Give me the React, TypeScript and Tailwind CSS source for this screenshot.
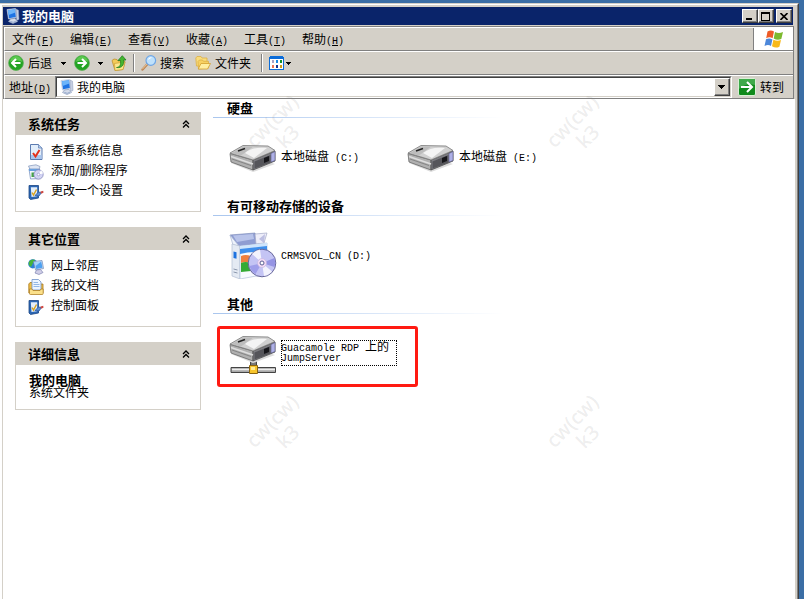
import type { ReactNode } from "react";

type Kids = { children: ReactNode };

const raised = "border border-t-white border-l-white border-r-[#404040] border-b-[#404040] bg-[#d4d0c8] shadow-[inset_-1px_-1px_0_#808080]";

function Mono({ children }: Kids) {
  return <span className="font-['Liberation_Mono',monospace] text-[10px] leading-none">{children}</span>;
}

function ComputerIcon() {
  return (
    <svg viewBox="0 0 16 16" className="size-4 shrink-0" aria-hidden="true">
      <path d="M2 1.500 10.500 .5 11.500 9.500 3.500 11z" fill="#e6edf7" stroke="#b4c3dc" strokeWidth=".7" />
      <path d="M2.800 2.200 10 1.300 10.900 8.900 4 10.200z" fill="#1f74e4" />
      <path d="M2.800 2.200 10 1.300 10.400 4.500 3.500 7z" fill="#6cb4fa" />
      <path d="M11 1 13.500 2.200 14 11.500 11.500 12.500z" fill="#c6cfe2" stroke="#8d9bb8" strokeWidth=".5" />
      <path d="M5.500 11 10 10.300 12.500 13.500 8 15.500 3.500 13.500z" fill="#d5dcea" stroke="#8c9dbd" strokeWidth=".7" />
      <path d="m5.300 13.300 2.900 1 2.800-1.200" stroke="#7f98c2" strokeWidth=".7" fill="none" />
    </svg>
  );
}

function RoundArrow({ back = false }: { back?: boolean }) {
  return (
    <svg viewBox="0 0 16 16" className="size-4 shrink-0" aria-hidden="true">
      <circle cx="8" cy="8" r="7.400" fill="#22a322" stroke="#5cae55" strokeWidth=".8" />
      <path d="M2 7a6 6 0 0 1 12 0c-3-2-9-2-12 0z" fill="#5cc850" />
      <path d={back ? "M12.500 8H4.500M8 4 4 8l4 4" : "M3.500 8h8M8 4l4 4-4 4"} stroke="#fff" strokeWidth="2" fill="none" />
    </svg>
  );
}

function UpFolderIcon() {
  return (
    <svg viewBox="0 0 16 16" className="size-4 shrink-0" aria-hidden="true">
      <path d="M1 5.500 3 4l3 .5 1 1.500 6-.5 1 1.500-2 7.500-8 1z" fill="#f3cb58" stroke="#b98a22" strokeWidth=".7" />
      <path d="M3.500 8.500 14 7l-2 7.500L4 15.500z" fill="#fde88f" stroke="#c2962c" strokeWidth=".6" />
      <path d="M5.500 12.500c3.500-.3 4.500-2.800 4-7H7L11.300.700 15 5h-2.300c.5 5-1.700 8.300-7.200 7.500z" fill="#44b62f" stroke="#17751a" strokeWidth=".7" />
    </svg>
  );
}

function SearchIcon() {
  return (
    <svg viewBox="0 0 16 16" className="size-4 shrink-0" aria-hidden="true">
      <path d="M6.500 9 1.500 14.500" stroke="#b98556" strokeWidth="2.400" strokeLinecap="round" />
      <path d="M6.300 8.800 1.500 14" stroke="#f0c898" strokeWidth="1" strokeLinecap="round" />
      <circle cx="9.800" cy="5.500" r="4.800" fill="#bfe1fb" stroke="#6ea6e6" strokeWidth="1.200" />
      <path d="M7 5a3.200 3.200 0 0 1 4-2.600C9.500 3 8.500 4 7 5z" fill="#fff" />
    </svg>
  );
}

function FoldersIcon() {
  return (
    <svg viewBox="0 0 16 16" className="size-4 shrink-0" aria-hidden="true">
      <path d="M.8 3 2 1.500h4L7 3h5v8H1.500z" fill="#f8dc7d" stroke="#dcae44" strokeWidth=".8" />
      <path d="M3 6.500 4.500 5h3l1 1.300h5V13l-10 1z" fill="#f7d163" stroke="#dcae44" strokeWidth=".8" />
      <path d="M3.200 14 6 8.500h9.500L12.500 14z" fill="#ffeea2" stroke="#d39f2e" strokeWidth=".8" />
    </svg>
  );
}

function ViewsIcon() {
  return (
    <svg viewBox="0 0 16 16" className="size-4 shrink-0" aria-hidden="true" shapeRendering="crispEdges">
      <path d="M0 2h1V1h13v1h1v13H0z" fill="#0c6cd8" />
      <path d="M1 4h13v10H1z" fill="#fff" />
      <path d="M3 5h2v3H3z" fill="#a9a3c5" />
      <path d="M7 5h2v3H7z" fill="#1688e2" />
      <path d="M11 5h2v3h-2z" fill="#129028" />
      <path d="M3 10h2v3H3z" fill="#ec7554" />
      <path d="M7 10h2v3H7z" fill="#16348f" />
      <path d="M11 10h2v3h-2z" fill="#cf9c14" />
    </svg>
  );
}

function FlagIcon() {
  return (
    <svg viewBox="0 0 20 18" className="h-[18px] w-5" aria-hidden="true">
      <path d="M3.500 1.500C6-.2 8 .3 10 1.500L8.600 8.300C6.500 7 4.500 7 2.200 8.200z" fill="#ee5b27" />
      <path d="M11 2c2.500 1.300 5 1.300 8 0l-1.700 7c-2.500 1.200-5 1-7.600-.4z" fill="#7cb92e" />
      <path d="M2 9.300c2.300-1.300 4.300-1.200 6.400.2L7 16C5 14.600 3 14.700.5 16z" fill="#4c87da" />
      <path d="M9.400 9.800c2.500 1.200 5 1.300 7.600.3l-1.600 6.600c-2.700 1.300-5 1-7.400-.4z" fill="#f8b91b" />
    </svg>
  );
}

function GoIcon() {
  return (
    <svg viewBox="0 0 18 18" className="size-[18px] shrink-0" aria-hidden="true">
      <rect x=".5" y=".5" width="17" height="17" rx="1.500" fill="#108a1c" stroke="#d9efd5" />
      <path d="M1 1h16v6C11 5 6 7 1 11z" fill="#3fa94a" />
      <path d="M3 9h11M9 4l5 5-5 5" stroke="#fff" strokeWidth="2" fill="none" />
    </svg>
  );
}

function InfoIcon() {
  return (
    <svg viewBox="0 0 16 16" className="size-4 shrink-0" aria-hidden="true">
      <path d="M2.500.5h8L14 4v11.500H2.500z" fill="#e2eefb" stroke="#5c7bb0" />
      <path d="M10.500.5V4H14" fill="#b5cdec" stroke="#5c7bb0" strokeWidth=".7" />
      <path d="M3 11h10.500v4H3z" fill="#a9c6ee" />
      <path d="m5 9 2.500 3.500L11.500 6" stroke="#e3301b" strokeWidth="2" fill="none" />
    </svg>
  );
}

function ProgramsIcon() {
  return (
    <svg viewBox="0 0 16 16" className="size-4 shrink-0" aria-hidden="true">
      <path d="M.5 2 8 .8 12 2.500 11 6 2.500 6.500z" fill="#dfe6f3" stroke="#8093b9" strokeWidth=".7" />
      <path d="M1 5h10.500v9.500L2.500 15z" fill="#f4f7fc" stroke="#6886b8" strokeWidth=".7" />
      <path d="M1 5h10.500v2H1z" fill="#69a1e0" />
      <path d="M3.500 8.500h3V13h-3z" fill="#47a447" />
      <circle cx="10.500" cy="10.500" r="4.700" fill="#d3d4f4" stroke="#7b7fb4" strokeWidth=".7" />
      <path d="m10.500 10.500 2.500-4a4.700 4.700 0 0 1 2 3z" fill="#fff" />
      <circle cx="10.500" cy="10.500" r="1.300" fill="#fff" stroke="#888cc4" strokeWidth=".6" />
    </svg>
  );
}

function SettingsIcon() {
  return (
    <svg viewBox="0 0 16 16" className="size-4 shrink-0" aria-hidden="true">
      <path d="M1 1.500h9.500V14L2.500 15.500 1 14z" fill="#2b67b5" stroke="#1d4683" strokeWidth=".8" />
      <path d="M2.800 3.300h6.400v8.900L3.500 13z" fill="#e3eefb" />
      <path d="M4 8.500 5.500 11 8.500 5.500" stroke="#d8a31c" strokeWidth="1.400" fill="none" />
      <path d="m7 11.500 3.500-3.500 3 .5-2.500 3.500z" fill="#5b90d6" stroke="#2b559a" strokeWidth=".8" />
      <path d="m12.500 7.500 2.700-.7.300 2-2.500 1z" fill="#cf4a43" />
    </svg>
  );
}

function NetworkIcon() {
  return (
    <svg viewBox="0 0 16 16" className="size-4 shrink-0" aria-hidden="true">
      <circle cx="4.800" cy="4.800" r="4.600" fill="#2b7fd8" />
      <path d="M.8 3c1.500-2.500 4-3.200 6.500-2L5 4 3 8 .8 6z" fill="#46b43c" />
      <path d="M5.500 2.500 14 1.500l1.500 8L7.500 11z" fill="#dbe6f4" stroke="#6d87b5" strokeWidth=".7" />
      <path d="m6.500 3.300 6.800-.9 1.200 6.400-6.300 1.100z" fill="#4da1f1" />
      <path d="m6.500 3.300 6.800-.9-6 4.900z" fill="#a4d5fb" />
      <path d="m8.500 11 4-.5 2.500 3-4 2-4-1.500z" fill="#d0cee7" stroke="#7c83b0" strokeWidth=".7" />
    </svg>
  );
}

function DocumentsIcon() {
  return (
    <svg viewBox="0 0 16 16" className="size-4 shrink-0" aria-hidden="true">
      <path d="M.8 5 2 3.500h3l1 1.500h9V14H.8z" fill="#f0bd45" stroke="#a87a1e" strokeWidth=".8" />
      <path d="M4 .5h6.500L13 3v8H4z" fill="#edf5ff" stroke="#6f92c9" strokeWidth=".8" />
      <path d="M5.500 3.500h4.500M5.500 5.500h6M5.500 7.500h6" stroke="#7ba7e0" strokeWidth=".8" />
      <path d="M1.500 10h2.500l1 1.500h7l1-1.500h2.200v4.500q0 1-1 1H2.500q-1 0-1-1z" fill="#fbe08a" stroke="#b0812a" strokeWidth=".8" />
    </svg>
  );
}

function DriveBody() {
  return (
    <g>
      <path d="M2 30 24 39 46 31 40 29z" fill="#dcdcdc" />
      <path d="M1 20.500 24 27V37L2 29z" fill="#b0b0b0" stroke="#666" strokeWidth=".8" />
      <path d="M24 27 46 18V28L24 37z" fill="#7d7d82" stroke="#4c4c4c" strokeWidth=".8" />
      <path d="M1 20 14 12.500 39 13l7 4.500L24 27z" fill="#d0d0d0" stroke="#777" strokeWidth=".8" />
      <path d="M3 20 14.500 13.500 24 13.700 12 22.500z" fill="#bcbcbc" />
      <path d="M16 20c6-5 13-6 22-5L25 25z" fill="#f4f4f4" />
      <path d="m9 18 7-2.500" stroke="#222" strokeWidth="1.500" />
      <path d="M2 23.500 24 31" stroke="#dedede" strokeWidth="1.500" />
      <path d="M3 26 22 32.500" stroke="#858585" />
      <path d="m25.500 28.500 16-6.500v7.500l-16 6z" fill="#55555a" />
      <path d="m35 25 5-2v5l-5 2z" fill="#16161a" />
      <path d="m42 20.500 4-2v9L42 29z" fill="#aeb0e6" stroke="#5b5c88" strokeWidth=".6" />
    </g>
  );
}

function DriveIcon() {
  return (
    <svg viewBox="0 0 48 48" className="size-12 shrink-0" aria-hidden="true">
      <DriveBody />
    </svg>
  );
}

function NetworkDriveIcon() {
  return (
    <svg viewBox="0 0 48 48" className="size-12 shrink-0" aria-hidden="true">
      <path d="M21.500 28h6v10h-6z" fill="#777" stroke="#444" />
      <g transform="translate(0 -5)">
        <DriveBody />
      </g>
      <path d="M2 38.500h44.500v5H2z" fill="#a9a9a9" stroke="#444" />
      <path d="M3 40.500h43" stroke="#ededed" strokeWidth="1.500" />
      <path d="M20.500 36.500h8v8h-8z" fill="#f7c52c" stroke="#8c6510" />
      <path d="M22 38h4v3h-4z" fill="#ffec96" />
    </svg>
  );
}

function DiscBoxIcon() {
  return (
    <svg viewBox="0 0 48 48" className="size-12 shrink-0" aria-hidden="true">
      <path d="M1 4 26 2l2 11-18 3z" fill="#8f9dd2" stroke="#8492bd" strokeWidth=".7" />
      <path d="M4 4.500 24 3l1 5-17 3z" fill="#b9c4ea" />
      <path d="M1 4 10 15l-6-1z" fill="#eef3fb" stroke="#a9b6d2" strokeWidth=".7" />
      <path d="m26 3 12-1-3 10-8 1z" fill="#eeeef9" stroke="#a3a9c6" strokeWidth=".7" />
      <path d="m30 8 6-5-1 9z" fill="#bdbfe2" />
      <path d="m3 13 8 2v33l-8-3z" fill="#e4eaf3" stroke="#b3bfd3" strokeWidth=".7" />
      <path d="m4.500 20.500 3 .8v6.500l-3-.8z" fill="#1d72df" />
      <path d="m4.500 38 4 1m-4 2 4 1" stroke="#8c98ad" />
      <path d="m11 15 27-3v31l-27 5z" fill="#f8fbff" stroke="#b3c1da" strokeWidth=".7" />
      <path d="m11 17 27-3v12c-6-6-14-6-27-3z" fill="#3f8fec" />
      <path d="M11 15 38 12v3l-27 3z" fill="#cfe5fc" />
      <path d="M12 25c3-1.500 6-1.500 10 0v7c-4-1.500-7-1.500-10 0z" fill="#f0803e" />
      <path d="M12 32c3-1.500 6-1.500 10 0v8l-10 1z" fill="#35ab35" />
      <circle cx="33" cy="32" r="13.800" fill="#c4c4f4" stroke="#67679a" />
      <path d="M33 32 23 23a13 13 0 0 1 8-4.500zM33 32l10 8.500a13 13 0 0 1-8 4.500z" fill="#fff" opacity=".8" />
      <path d="m33 32 12.500-5a13 13 0 0 1 0 9z" fill="#9594e4" />
      <path d="m33 32-12.500 3a13 13 0 0 0 6 8z" fill="#9f9eea" />
      <circle cx="33" cy="32" r="4.500" fill="#f2dbf4" stroke="#c3b6e2" strokeWidth=".7" />
      <circle cx="33" cy="32" r="2" fill="#fff" stroke="#595d93" />
    </svg>
  );
}

function DownArrow() {
  return (
    <svg viewBox="0 0 5 3" className="h-[3px] w-[5px]" aria-hidden="true" shapeRendering="crispEdges">
      <path d="M0 0h5v1H4v1H3v1H2V2H1V1H0z" />
    </svg>
  );
}

function Separator() {
  return <span className="h-[18px] w-[2px] border-l border-[#808080] bg-white" />;
}

function Bar({ children, className }: Kids & { className: string }) {
  return (
    <div className={"flex h-6 items-center border-t border-b border-l border-t-white border-b-[#808080] border-l-white " + className}>
      {children}
    </div>
  );
}

const menus = [
  ["文件", "F"],
  ["编辑", "E"],
  ["查看", "V"],
  ["收藏", "A"],
  ["工具", "T"],
  ["帮助", "H"],
];

function Panel({ title, children }: Kids & { title: string }) {
  return (
    <section className="border border-[#d4d0c8]">
      <h2 className="flex h-[22px] items-center justify-between bg-[#d4d0c8] pr-[10px] pl-3 text-[13px] font-bold">
        {title}
        <button aria-label={"折叠" + title}>
          <svg viewBox="0 0 8 8" className="size-2" aria-hidden="true">
            <path d="m1 4 3-3 3 3M1 7.500l3-3 3 3" stroke="#000" strokeWidth="1.300" fill="none" />
          </svg>
        </button>
      </h2>
      {children}
    </section>
  );
}

function TaskList({ tasks }: { tasks: { icon: ReactNode; text: string }[] }) {
  return (
    <ul className="px-3 pt-[5px] pb-[11px]">
      {tasks.map((task) => (
        <li key={task.text}>
          <a href="#" className="flex h-5 items-center gap-[7px]">
            <span className="pt-1">{task.icon}</span>
            {task.text}
          </a>
        </li>
      ))}
    </ul>
  );
}

function Group({ title, children }: Kids & { title: string }) {
  return (
    <section>
      <h2 className="py-px pl-[14px] text-[13px] leading-4 font-bold">{title}</h2>
      <div className="h-px max-w-[290px] bg-linear-to-r from-[#a9c6ee] to-white" />
      <ul className="flex flex-wrap pt-[15px] pb-4 pl-4">{children}</ul>
    </section>
  );
}

function Item({ icon, children }: Kids & { icon: ReactNode }) {
  return (
    <li className="w-[178px]">
      <a href="#" className="flex items-center gap-1 leading-3 whitespace-nowrap">
        {icon}
        <span>{children}</span>
      </a>
    </li>
  );
}

function Watermark({ place }: { place: string }) {
  return (
    <div className={"pointer-events-none absolute h-11 w-[76px] -rotate-45 text-center font-['Noto_Sans',sans-serif] text-[20px] leading-[22px] font-medium text-[#808080]/15 " + place}>
      <p>cw(cw)</p>
      <p>k3</p>
    </div>
  );
}

export default function App() {
  return (
    <div className="relative flex min-h-screen flex-col overflow-hidden bg-[#3b6ea5] pt-[3px] pr-[5px] font-['Noto_Sans_CJK_SC',sans-serif] text-[12px] leading-4 text-black">
      <div className="flex flex-1 flex-col border-t border-r border-t-[#d4d0c8] border-r-[#404040]">
        <div className="flex flex-1 flex-col border-t border-r border-l-2 border-t-white border-r-[#808080] border-l-white bg-[#d4d0c8] pt-[2px] pr-[2px] pl-px">
          <header className="mr-[2px] flex h-[18px] items-center bg-[#0a246a] pr-px pl-[2px]">
            <ComputerIcon />
            <h1 className="flex-1 pl-px text-[13px] font-bold text-white">我的电脑</h1>
            <button aria-label="最小化" className={"flex h-[14px] w-4 items-end pb-[2px] pl-[3px] " + raised}>
              <span className="h-[2px] w-[6px] bg-black" />
            </button>
            <button aria-label="最大化" className={"flex h-[14px] w-4 items-center justify-center pr-px " + raised}>
              <span className="h-[9px] w-[9px] border border-t-2 border-black" />
            </button>
            <button aria-label="关闭" className={"ml-[2px] flex h-[14px] w-4 items-center justify-center " + raised}>
              <svg viewBox="0 0 8 7" className="h-[7px] w-2" aria-hidden="true">
                <path d="m.5 0 7 7m0-7-7 7" stroke="#000" strokeWidth="1.600" />
              </svg>
            </button>
          </header>

          <div className="mt-px mr-px border-t border-r border-l border-[#808080]">
            <Bar className="justify-between">
              <nav className="flex">
                {menus.map(([name, key]) => (
                  <button key={key} className="w-[58px] pl-[7px] text-left whitespace-nowrap">
                    {name}
                    <Mono>
                      (<u>{key}</u>)
                    </Mono>
                  </button>
                ))}
              </nav>
              <span className="flex h-full w-10 items-center justify-center border-l border-[#808080] bg-white">
                <FlagIcon />
              </span>
            </Bar>

            <Bar className="pl-[3px]">
              <button className="flex items-center gap-1">
                <RoundArrow back />
                后退
              </button>
              <button aria-label="后退历史" className="flex h-4 w-[22px] items-center justify-center">
                <DownArrow />
              </button>
              <button aria-label="前进">
                <RoundArrow />
              </button>
              <button aria-label="前进历史" className="flex h-4 w-[21px] items-center justify-center">
                <DownArrow />
              </button>
              <button aria-label="向上">
                <UpFolderIcon />
              </button>
              <span className="flex w-[14px] justify-center">
                <Separator />
              </span>
              <button className="flex items-center gap-[3px]">
                <SearchIcon />
                搜索
              </button>
              <button className="ml-[11px] flex items-center gap-1">
                <FoldersIcon />
                文件夹
              </button>
              <span className="ml-[10px] flex w-2">
                <Separator />
              </span>
              <button aria-label="查看方式" className="flex items-center gap-px">
                <ViewsIcon />
                <DownArrow />
              </button>
            </Bar>

            <Bar className="pl-1">
              <label htmlFor="address" className="w-[46px] whitespace-nowrap">
                地址
                <Mono>
                  (<u>D</u>)
                </Mono>
              </label>
              <div className="flex h-full flex-1 items-center border border-t-[#808080] border-r-white border-b-white border-l-[#808080] bg-white">
                <div className="flex h-full flex-1 items-center border border-t-[#404040] border-r-[#d4d0c8] border-b-[#d4d0c8] border-l-[#404040] pl-[2px]">
                  <ComputerIcon />
                  <input id="address" defaultValue="我的电脑" className="h-4 min-w-0 flex-1 pl-[2px] outline-none" />
                  <button aria-label="展开地址列表" className={"flex h-full w-4 items-center justify-center " + raised}>
                    <svg viewBox="0 0 7 4" className="h-1 w-[7px]" aria-hidden="true" shapeRendering="crispEdges">
                      <path d="M0 0h7v1H6v1H5v1H4v1H3V3H2V2H1V1H0z" />
                    </svg>
                  </button>
                </div>
              </div>
              <button className="flex items-center gap-1 pr-[9px] pl-[6px]">
                <GoIcon />
                转到
              </button>
            </Bar>
          </div>

          <div className="flex flex-1 bg-white">
            <aside className="ml-3 flex w-[186px] shrink-0 flex-col gap-[15px] pt-[13px]">
              <Panel title="系统任务">
                <TaskList
                  tasks={[
                    { icon: <InfoIcon />, text: "查看系统信息" },
                    { icon: <ProgramsIcon />, text: "添加/删除程序" },
                    { icon: <SettingsIcon />, text: "更改一个设置" },
                  ]}
                />
              </Panel>
              <Panel title="其它位置">
                <TaskList
                  tasks={[
                    { icon: <NetworkIcon />, text: "网上邻居" },
                    { icon: <DocumentsIcon />, text: "我的文档" },
                    { icon: <SettingsIcon />, text: "控制面板" },
                  ]}
                />
              </Panel>
              <Panel title="详细信息">
                <div className="px-[13px] pt-[9px] pb-[11px] leading-3">
                  <p className="text-[13px] font-bold">我的电脑</p>
                  <p>系统文件夹</p>
                </div>
              </Panel>
            </aside>

            <main className="ml-3 min-w-0 flex-1">
              <Group title="硬盘">
                <Item icon={<DriveIcon />}>
                  本地磁盘<Mono> (C:)</Mono>
                </Item>
                <Item icon={<DriveIcon />}>
                  本地磁盘<Mono> (E:)</Mono>
                </Item>
              </Group>
              <Group title="有可移动存储的设备">
                <Item icon={<DiscBoxIcon />}>
                  <Mono>CRMSVOL_CN (D:)</Mono>
                </Item>
              </Group>
              <Group title="其他">
                <li className="relative">
                  <a href="#" className="flex items-center gap-1 leading-3 whitespace-nowrap">
                    <NetworkDriveIcon />
                    <span className="flex h-[26px] w-[116px] flex-col outline-1 -outline-offset-1 outline-black outline-dotted">
                      <span className="h-[13px]">
                        <Mono>Guacamole RDP </Mono>上的
                      </span>
                      <span className="font-['Liberation_Mono',monospace] text-[10px] leading-3">JumpServer</span>
                    </span>
                  </a>
                  <span className="absolute -top-[3px] -left-3 h-[61px] w-[201px] rounded-[3px] border-3 border-[#ff1a12]" />
                </li>
              </Group>
            </main>
          </div>
        </div>
      </div>

      <Watermark place="top-[107px] left-[242px]" />
      <Watermark place="top-[107px] left-[542px]" />
      <Watermark place="top-[407px] left-[242px]" />
      <Watermark place="top-[407px] left-[542px]" />
    </div>
  );
}
